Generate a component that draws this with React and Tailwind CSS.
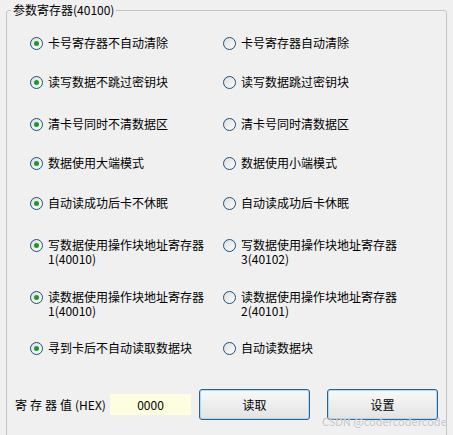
const font = { fontFamily: '"Noto Sans CJK SC", "Liberation Sans", sans-serif' }

const rows = [
  { gap: "mt-0", left: ["卡号寄存器不自动清除"], right: ["卡号寄存器自动清除"] },
  { gap: "mt-[25px]", left: ["读写数据不跳过密钥块"], right: ["读写数据跳过密钥块"] },
  { gap: "mt-[28px]", left: ["清卡号同时不清数据区"], right: ["清卡号同时清数据区"] },
  { gap: "mt-[25px]", left: ["数据使用大端模式"], right: ["数据使用小端模式"] },
  { gap: "mt-[26px]", left: ["自动读成功后卡不休眠"], right: ["自动读成功后卡休眠"] },
  { gap: "mt-[28px]", left: ["写数据使用操作块地址寄存器", "1(40010)"], right: ["写数据使用操作块地址寄存器", "3(40102)"] },
  { gap: "mt-[24px]", left: ["读数据使用操作块地址寄存器", "1(40010)"], right: ["读数据使用操作块地址寄存器", "2(40101)"] },
  { gap: "mt-[23px]", left: ["寻到卡后不自动读取数据块"], right: ["自动读数据块"] },
]

function Radio({ checked, lines }) {
  return (
    <div className="flex items-start gap-[5px]">
      <span className="mt-[1px] w-[13px] h-[13px] shrink-0 rounded-full border border-[#1f4f7e] bg-linear-to-br from-[#dcdcdc] to-[#ffffff] flex items-center justify-center">
        {checked && <span className="w-[5px] h-[5px] rounded-full bg-[#1c9a25]" />}
      </span>
      <div className="text-[12px] leading-[14px] text-black">
        <div>{lines[0]}</div>
        {lines[1] && <div>{lines[1]}</div>}
      </div>
    </div>
  )
}

function WinButton({ children }) {
  return (
    <button className="w-[111px] h-[31px] rounded-[3px] border border-[#2c628b] shadow-[inset_0_0_0_1px_#a9d8f8] bg-linear-to-b from-[#f9f9f9] to-[#e3e3e3] text-[12px] text-black">
      {children}
    </button>
  )
}

export default function App() {
  const sel = rows.map(() => 0)
  return (
    <div className="relative w-[453px] h-[435px] overflow-hidden bg-[#f0f0f0]" style={font}>
      <fieldset className="mt-[2px] ml-[6px] w-[441px] h-[460px] border border-[#c4c4c4] rounded-[3px]">
        <legend className="ml-[4px] px-[2px] text-[12px] leading-[16px] text-black">参数寄存器(40100)</legend>
        <div className="pt-[18px] pl-[23px]">
          {rows.map((r, i) => (
            <div key={i} className={`${r.gap} grid grid-cols-[193px_1fr]`}>
              <Radio checked={sel[i] === 0} lines={r.left} />
              <Radio checked={sel[i] === 1} lines={r.right} />
            </div>
          ))}
        </div>
        <div className="mt-[34px] ml-[8px] flex items-center">
          <div className="w-[95px] text-[12px] text-black">
            <span className="tracking-[3px]">寄存器值</span>
            <span>(HEX)</span>
          </div>
          <div className="w-[81px] h-[21px] bg-[#fdfde0] flex items-center justify-center text-[12px] text-black">0000</div>
          <div className="ml-[8px]">
            <WinButton>读取</WinButton>
          </div>
          <div className="ml-[17px]">
            <WinButton>设置</WinButton>
          </div>
        </div>
      </fieldset>
      <div className="absolute left-[322px] top-[414px] text-[11px] leading-[14px] text-[#c2c2c2] [text-shadow:0_0_1px_#ffffff]">
        CSDN @codercodercode
      </div>
    </div>
  )
}
